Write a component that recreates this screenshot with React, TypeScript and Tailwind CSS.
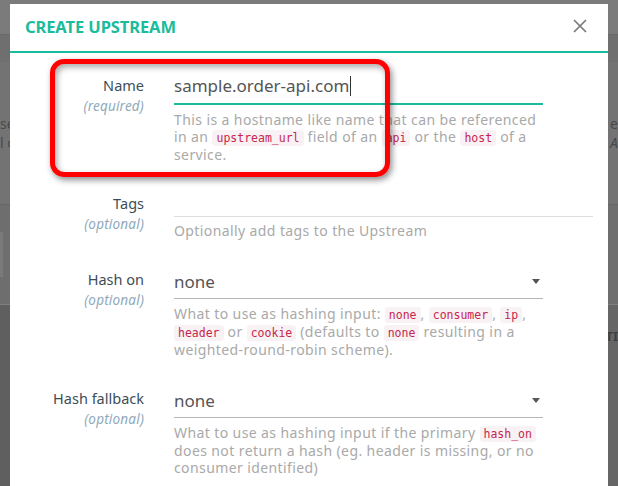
import React from "react";

const font = { fontFamily: '"Noto Sans", "Open Sans", sans-serif' };

function Code({ children }: { children: React.ReactNode }) {
  return (
    <code className="inline-block rounded-[3px] bg-[#f9f2f4] px-[4px] text-[11.5px] leading-[16px] tracking-normal text-[#c7254e] [font-family:'DejaVu_Sans_Mono',monospace]">
      {children}
    </code>
  );
}

function Label({ title, sub }: { title: string; sub: string }) {
  return (
    <div className="w-[134px] shrink-0 text-right">
      <div className="text-[14.5px] leading-[20px] text-[#3d4d57]">{title}</div>
      <div className="mt-[1px] text-[13.5px] italic leading-[21px] tracking-[0.2px] text-[#8fa9bb]">{sub}</div>
    </div>
  );
}

function Caret() {
  return (
    <span className="h-0 w-0 border-x-[4px] border-t-[5px] border-x-transparent border-t-[#555]" />
  );
}

const help = "text-[14px] leading-[17px] tracking-[0.4px] text-[#a9a9a9]";

export default function App() {
  return (
    <div className="relative h-[486px] w-[618px] overflow-hidden bg-[#6c6c6c]" style={font}>
      {/* dimmed page behind */}
      <div className="flex h-full flex-col">
        <div className="h-[35px] bg-[#7b7b7b] border-b border-[#6a6a6a]" />
        <div className="h-[27px] bg-[#6f6f6f]" />
        <div className="flex h-[143px] items-center justify-between bg-[#737373] border-b border-[#666]">
          <div className="text-[14px] leading-[19px] text-[#4a4a4a]">
            <div>se</div>
            <div>l c</div>
          </div>
          <div className="text-[14px] leading-[19px] text-[#4a4a4a]">
            <div>e</div>
            <div className="italic">A</div>
          </div>
        </div>
        <div className="flex h-[100px] items-center bg-[#6e6e6e] border-b border-[#808080]">
          <div className="h-[45px] w-[3px] bg-[#7a7a7a]" />
        </div>
        <div className="flex flex-1 justify-end bg-gradient-to-r from-[#5f5f5f] via-[#6c6c6c] to-[#666] pt-[22px]">
          <div className="text-[13px] font-bold text-[#3f3f3f]">ATI</div>
        </div>
      </div>

      {/* modal */}
      <div className="absolute bottom-0 left-[10px] top-[4px] w-[598px] bg-white">
        <div className="flex h-[49px] items-center justify-between border-b-2 border-[#1abc9c] pl-[15px] pr-[20px]">
          <div className="text-[16.5px] font-bold tracking-[-0.1px] text-[#1bbc9b]">CREATE UPSTREAM</div>
          <svg width="16" height="16" viewBox="0 0 16 16" className="mb-[4px]">
            <path d="M2 2 L14 14 M14 2 L2 14" stroke="#7a7a7a" strokeWidth="1.7" />
          </svg>
        </div>

        <div className="flex flex-col pt-[17px]">
          {/* Name */}
          <div className="flex">
            <div className="pt-[5px]">
              <Label title="Name" sub="(required)" />
            </div>
            <div className="ml-[30px] w-[369px]">
              <div className="flex h-[35px] items-center border-b-2 border-[#1abc9c] pb-[1px] text-[17px] text-[#555]">
                sample.order-api.com
                <span className="ml-[1px] h-[20px] w-[1px] bg-[#333]" />
              </div>
              <div className={`mt-[6px] ${help}`}>
                This is a hostname like name that can be referenced in an <Code>upstream_url</Code> field of an{" "}
                <Code>api</Code> or the <Code>host</Code> of a service.
              </div>
            </div>
          </div>

          {/* Tags */}
          <div className="mt-[20px] flex">
            <div className="pt-[10px]">
              <Label title="Tags" sub="(optional)" />
            </div>
            <div className="ml-[30px] w-[419px]">
              <div className="h-[34px] border-b border-[#dddddd]" />
              <div className={`mt-[5px] ${help}`}>Optionally add tags to the Upstream</div>
            </div>
          </div>

          {/* Hash on */}
          <div className="mt-[26px] flex">
            <div className="pt-[4px]">
              <Label title="Hash on" sub="(optional)" />
            </div>
            <div className="ml-[30px] w-[369px]">
              <div className="flex h-[34px] items-center justify-between border-b-[1.5px] border-[#b5b5b5] pr-[3px] text-[17px] text-[#555]">
                <span>none</span>
                <Caret />
              </div>
              <div className={`mt-[6px] ${help}`}>
                What to use as hashing input: <Code>none</Code>, <Code>consumer</Code>, <Code>ip</Code>,{" "}
                <Code>header</Code> or <Code>cookie</Code> (defaults to <Code>none</Code> resulting in a
                weighted-round-robin scheme).
              </div>
            </div>
          </div>

          {/* Hash fallback */}
          <div className="mt-[26px] flex">
            <div className="pt-[4px]">
              <Label title="Hash fallback" sub="(optional)" />
            </div>
            <div className="ml-[30px] w-[369px]">
              <div className="flex h-[34px] items-center justify-between border-b-[1.5px] border-[#b5b5b5] pr-[3px] text-[17px] text-[#555]">
                <span>none</span>
                <Caret />
              </div>
              <div className={`mt-[6px] ${help}`}>
                What to use as hashing input if the primary <Code>hash_on</Code> does not return a hash (eg. header
                is missing, or no consumer identified)
              </div>
            </div>
          </div>
        </div>
      </div>

      {/* red annotation box */}
      <div className="absolute left-[50px] top-[59px] h-[118px] w-[340px] rounded-[14px] border-[5px] border-[#ff0000] shadow-[2px_3px_6px_rgba(0,0,0,0.45),inset_2px_3px_6px_rgba(0,0,0,0.35)]" />
    </div>
  );
}
